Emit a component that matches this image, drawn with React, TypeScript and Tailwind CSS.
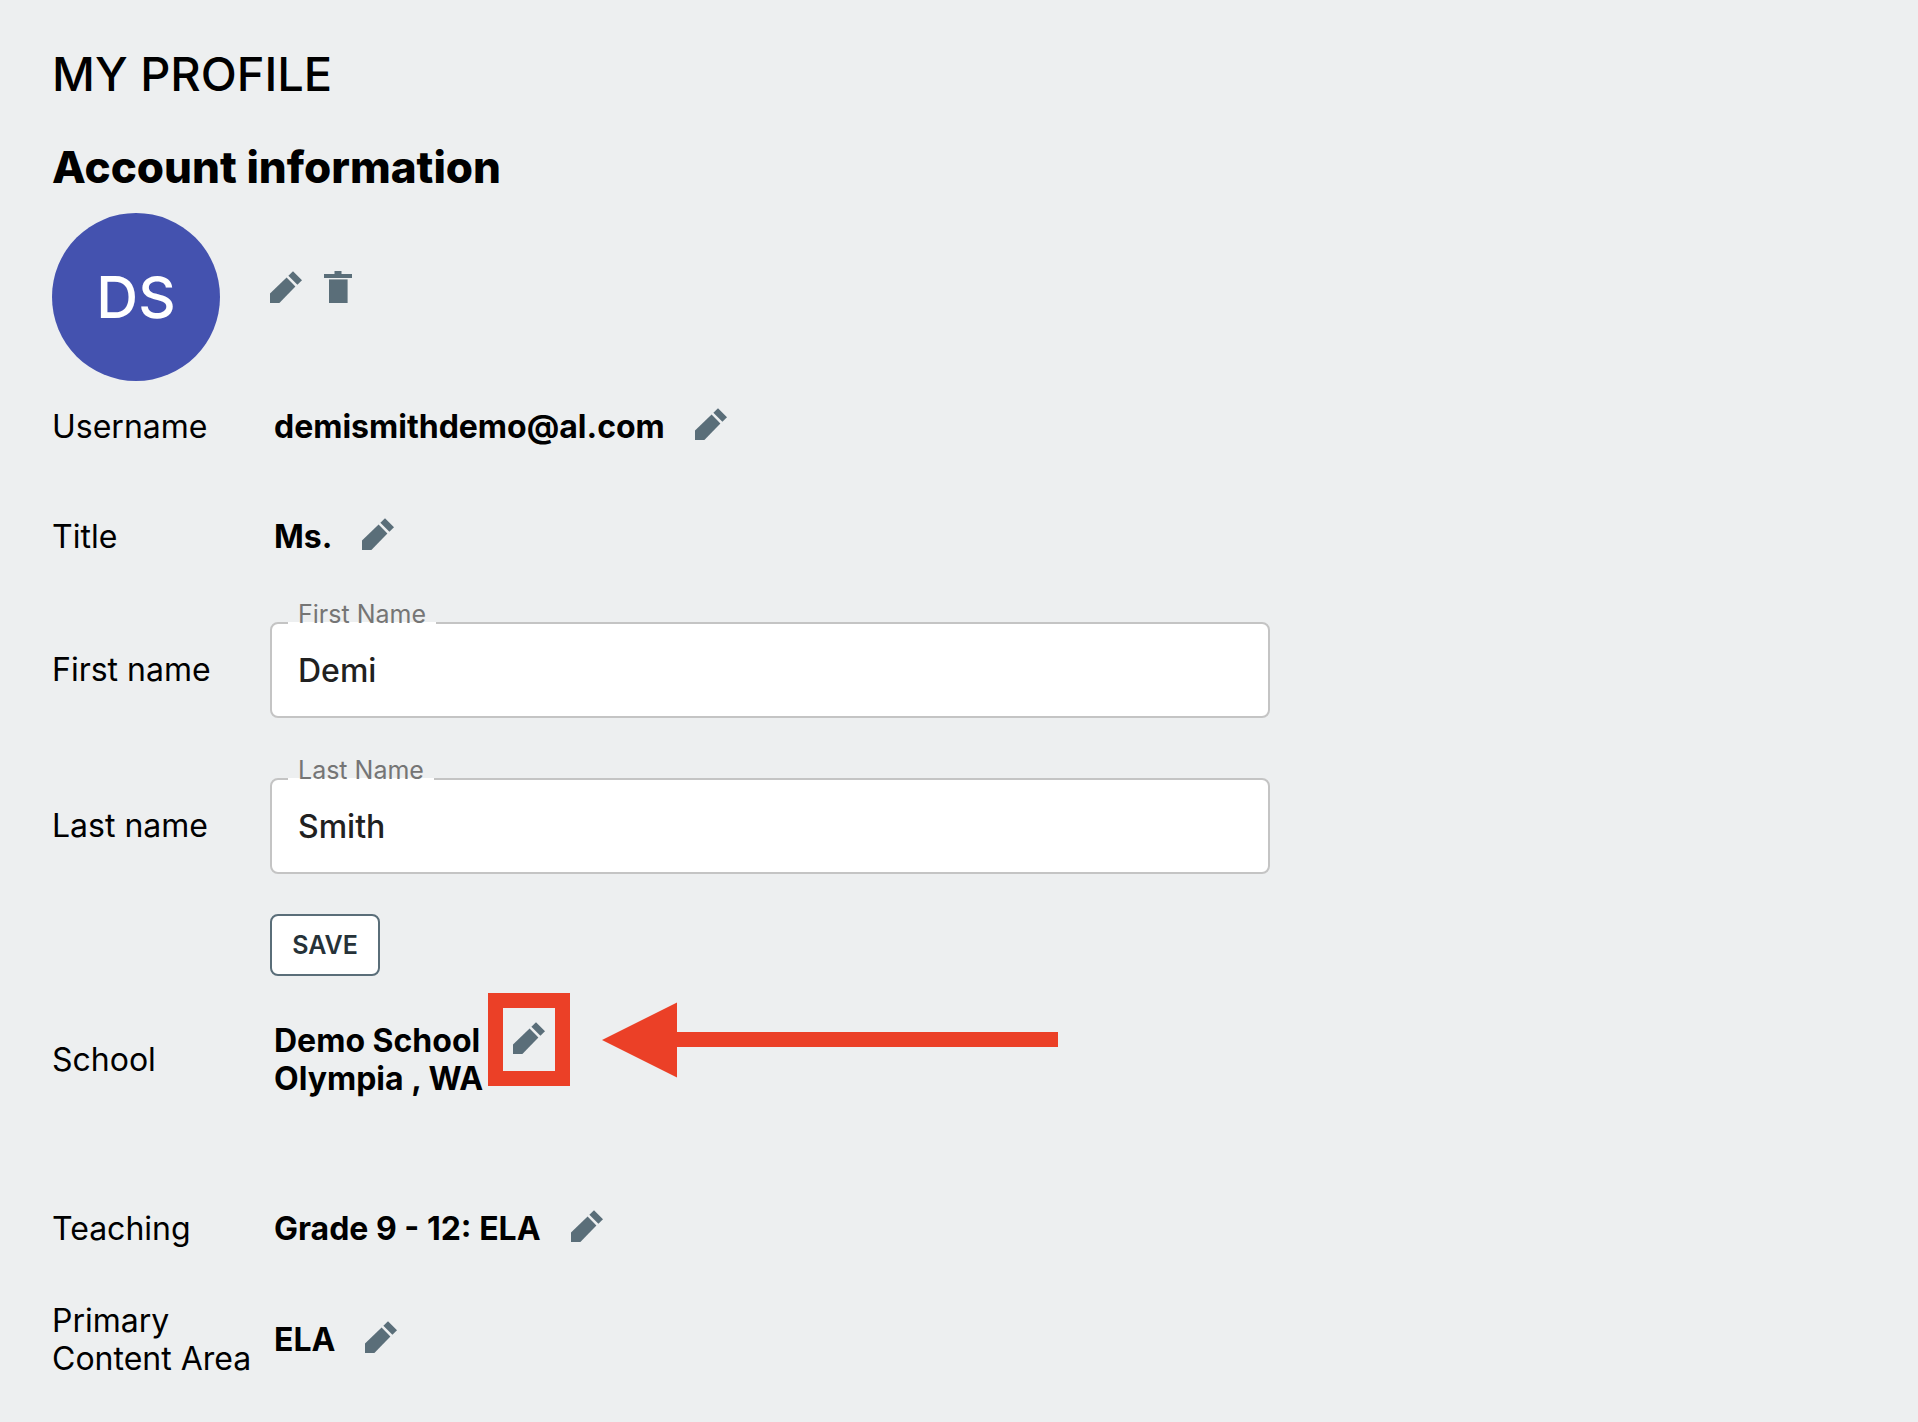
import React from "react";

interface RowProps {
  label?: string;
  htmlFor?: string;
  className?: string;
  children: React.ReactNode;
}

interface NameFieldProps {
  id: string;
  label: string;
  defaultValue: string;
}

const PencilIcon: React.FC = () => (
  <svg viewBox="0 0 32 32" className="size-8 fill-[#5a6e79]" aria-hidden="true">
    <path d="M0 22.6 16.6 6.4 25.4 15.4 9.4 32H0Z" />
    <path d="M23 .2 32 9.2 27.4 13.8 18.4 4.8Z" />
  </svg>
);

const TrashIcon: React.FC = () => (
  <svg viewBox="0 0 28 32" className="h-8 w-7 fill-[#5a6e79]" aria-hidden="true">
    <path d="M10.5 0h7v3H28v4H0V3h10.5Z" />
    <path d="M5 8.4h18.6V32H5Z" />
  </svg>
);

const EditButton: React.FC<{ label: string }> = ({ label }) => (
  <button type="button" aria-label={label} className="block cursor-pointer">
    <PencilIcon />
  </button>
);

const Row: React.FC<RowProps> = ({ label, htmlFor, className, children }) => {
  return (
    <div
      className={[
        "grid grid-cols-[218px_minmax(0,1fr)] items-center",
        className || "",
      ].join(" ")}
    >
      {htmlFor ? <label htmlFor={htmlFor}>{label}</label> : <div>{label}</div>}
      {children}
    </div>
  );
};

const Value: React.FC<{ edit: string; children: React.ReactNode }> = ({
  edit,
  children,
}) => (
  <div className="flex items-start gap-[30px] pl-1 font-bold">
    <span>{children}</span>
    <EditButton label={edit} />
  </div>
);

const NameField: React.FC<NameFieldProps> = ({ id, label, defaultValue }) => {
  return (
    <div className="relative max-w-[1000px]">
      <input
        id={id}
        type="text"
        defaultValue={defaultValue}
        className="block h-24 w-full rounded-lg border-2 border-[#c4c4c4] bg-white px-[26px] font-medium text-[#212121] outline-none"
      />
      {/* white bottom edge cuts the input border under the legend */}
      <span className="absolute -top-5 left-[18px] h-[22px] border-b-2 border-white px-2.5 text-[25px] leading-[24px] text-[#757575]">
        {label}
      </span>
    </div>
  );
};

const Arrow: React.FC = () => (
  <svg
    viewBox="0 0 456 76"
    className="absolute -top-5 left-[89px] h-[76px] w-[456px] fill-[#eb4027]"
    aria-hidden="true"
  >
    <path d="M0 38 75 .5V30H456V45H75V75.5Z" />
  </svg>
);

export default function App() {
  return (
    <main className="min-h-screen bg-[#edeff0] px-[52px] pt-12 pb-11 font-['Inter',sans-serif] text-[32px] leading-[38px] text-black">
      <h1 className="text-[47px] leading-[52px] font-medium">MY PROFILE</h1>
      <h2 className="mt-[43px] text-[44px] leading-[48px] font-extrabold">
        Account information
      </h2>

      <section className="mt-[22px] flex items-center gap-[50px]">
        <div className="flex size-[168px] items-center justify-center rounded-full bg-[#4452af] text-[58px] font-medium text-white">
          DS
        </div>
        <div className="mb-5 flex gap-[22px]">
          <EditButton label="Edit avatar" />
          <button type="button" aria-label="Delete avatar" className="block cursor-pointer">
            <TrashIcon />
          </button>
        </div>
      </section>

      <Row label="Username" className="mt-[27px]">
        <Value edit="Edit username">demismithdemo@al.com</Value>
      </Row>
      <Row label="Title" className="mt-[72px]">
        <Value edit="Edit title">Ms.</Value>
      </Row>

      <form onSubmit={(e) => e.preventDefault()}>
        <Row label="First name" htmlFor="firstName" className="mt-[66px]">
          <NameField id="firstName" label="First Name" defaultValue="Demi" />
        </Row>
        <Row label="Last name" htmlFor="lastName" className="mt-[60px]">
          <NameField id="lastName" label="Last Name" defaultValue="Smith" />
        </Row>
        <Row className="mt-10">
          <button
            type="submit"
            className="h-[62px] w-[110px] cursor-pointer rounded-lg border-2 border-[#5a6e79] bg-white text-[25px] font-semibold text-[#263238]"
          >
            SAVE
          </button>
        </Row>
      </form>

      <Row label="School" className="mt-[46px]">
        <div className="flex items-start gap-[30px] pl-1 font-bold">
          <span>
            Demo School
            <br />
            Olympia , WA
          </span>
          <div className="relative">
            <EditButton label="Edit school" />
            <div className="absolute -top-[29px] -left-[25px] h-[93px] w-[82px] border-[15px] border-[#eb4027]" />
            <Arrow />
          </div>
        </div>
      </Row>
      <Row label="Teaching" className="mt-28">
        <Value edit="Edit teaching">Grade 9 - 12: ELA</Value>
      </Row>
      <Row label="Primary Content Area" className="mt-[54px]">
        <Value edit="Edit primary content area">ELA</Value>
      </Row>
    </main>
  );
}
